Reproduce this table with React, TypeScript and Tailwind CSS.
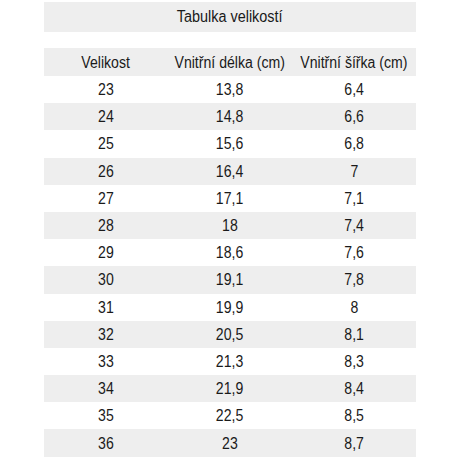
const rows: [string, string, string][] = [
  ["23", "13,8", "6,4"],
  ["24", "14,8", "6,6"],
  ["25", "15,6", "6,8"],
  ["26", "16,4", "7"],
  ["27", "17,1", "7,1"],
  ["28", "18", "7,4"],
  ["29", "18,6", "7,6"],
  ["30", "19,1", "7,8"],
  ["31", "19,9", "8"],
  ["32", "20,5", "8,1"],
  ["33", "21,3", "8,3"],
  ["34", "21,9", "8,4"],
  ["35", "22,5", "8,5"],
  ["36", "23", "8,7"],
];

function Cell({ children }: { children: string }) {
  return (
    <div className="flex justify-center">
      <span className="inline-block scale-x-[0.88] whitespace-nowrap">{children}</span>
    </div>
  );
}

export default function App() {
  return (
    <div className="h-[460px] w-[460px] bg-white pt-[2px] font-['Liberation_Sans',Arial,sans-serif] text-[16px] text-[#1a1a1a]">
      <div className="mx-[44px] flex h-[30px] items-center justify-center bg-[#eeeeee]">
        <span className="inline-block scale-x-[0.9]">Tabulka velikostí</span>
      </div>
      <div className="mx-[44px] mt-[16px]">
        <div className="grid h-[28px] grid-cols-3 items-center bg-[#eeeeee] pt-px">
          <Cell>Velikost</Cell>
          <Cell>Vnitřní délka (cm)</Cell>
          <Cell>Vnitřní šířka (cm)</Cell>
        </div>
        {rows.map((r, i) => (
          <div
            key={r[0]}
            className={`grid h-[27.2px] grid-cols-3 items-center pt-px ${i % 2 === 1 ? "bg-[#eeeeee]" : "bg-white"}`}
          >
            <Cell>{r[0]}</Cell>
            <Cell>{r[1]}</Cell>
            <Cell>{r[2]}</Cell>
          </div>
        ))}
      </div>
    </div>
  );
}
